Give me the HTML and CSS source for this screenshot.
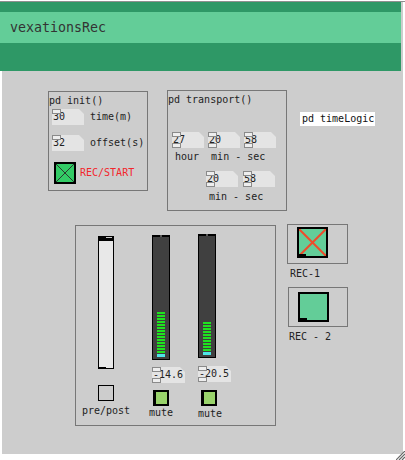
FILE: index.html
```html
<!DOCTYPE html>
<html lang="en">
<head>
  <meta charset="UTF-8">
  <meta name="viewport" content="width=device-width, initial-scale=1.0">
  <title>vexationsRec</title>
  <link rel="stylesheet" href="styles.css">
</head>
<body>
  <div class="window">
    <header class="titlebar">
      <div class="title">vexationsRec</div>
    </header>

    <main class="canvas">

      <!-- init subpatch -->
      <section class="sub init">
        <div class="sub-name">pd init()</div>
        <div class="row row-time">
          <span class="atom in">30</span>
          <span class="label">time(m)</span>
        </div>
        <div class="row row-offset">
          <span class="atom in">32</span>
          <span class="label">offset(s)</span>
        </div>
        <div class="row row-start">
          <span class="tgl tgl-start">
            <svg width="18" height="18" viewBox="0 0 18 18">
              <line x1="0" y1="0" x2="18" y2="18" stroke="#2a3a2e" stroke-width="1"/>
              <line x1="18" y1="0" x2="0" y2="18" stroke="#2a3a2e" stroke-width="1"/>
            </svg>
          </span>
          <span class="label red">REC/START</span>
        </div>
      </section>

      <!-- transport subpatch -->
      <section class="sub transport">
        <div class="sub-name">pd transport()</div>
        <div class="row row-clock">
          <span class="atom in out">27</span>
          <span class="atom in out">20</span>
          <span class="atom in out">58</span>
        </div>
        <div class="row row-units">
          <span class="label hour">hour</span>
          <span class="label minsec">min - sec</span>
        </div>
        <div class="row row-clock2">
          <span class="atom in out">20</span>
          <span class="atom in out">58</span>
        </div>
        <div class="row row-units2">
          <span class="label">min - sec</span>
        </div>
      </section>

      <div class="obj timelogic">pd timeLogic</div>

      <!-- mixer -->
      <section class="sub mixer">
        <div class="strip strip-pre">
          <div class="vslider"></div>
          <span class="tgl tgl-empty"></span>
          <span class="label">pre/post</span>
        </div>
        <div class="strip strip-a">
          <div class="vu vu-a">
            <div class="vu-level" style="height: 42px"></div>
            <div class="vu-clip"></div>
          </div>
          <span class="atom in out wide">-14.6</span>
          <span class="tgl tgl-mute"></span>
          <span class="label">mute</span>
        </div>
        <div class="strip strip-b">
          <div class="vu vu-b">
            <div class="vu-level" style="height: 30px"></div>
            <div class="vu-clip"></div>
          </div>
          <span class="atom in out wide">-20.5</span>
          <span class="tgl tgl-mute"></span>
          <span class="label">mute</span>
        </div>
      </section>

      <!-- record toggles -->
      <div class="rec rec-1">
        <div class="rec-frame">
          <span class="rec-tgl">
            <svg width="27" height="27" viewBox="0 0 27 27">
              <line x1="0" y1="0" x2="27" y2="27" stroke="#ef4b2b" stroke-width="2"/>
              <line x1="27" y1="0" x2="0" y2="27" stroke="#ef4b2b" stroke-width="2"/>
            </svg>
          </span>
        </div>
        <span class="label">REC-1</span>
      </div>

      <div class="rec rec-2">
        <div class="rec-frame">
          <span class="rec-tgl"></span>
        </div>
        <span class="label">REC - 2</span>
      </div>
    </main>
  </div>

  <svg class="grip" width="9" height="9" viewBox="0 0 9 9">
    <line x1="9" y1="0" x2="0" y2="9" stroke="#666" stroke-width="1.2"/>
    <line x1="9" y1="3" x2="3" y2="9" stroke="#666" stroke-width="1.2"/>
    <line x1="9" y1="6" x2="6" y2="9" stroke="#666" stroke-width="1.2"/>
  </svg>
</body>
</html>
```

FILE: styles.css
```css
/* Reset */
* {
  box-sizing: border-box;
  margin: 0;
  padding: 0;
}

body {
  position: relative;
  font-family: "DejaVu Sans Mono", "Liberation Mono", monospace;
  font-size: 10px;
  color: #222;
  background-color: #fff;
  padding-top: 1px;
  height: 460px;
  overflow: hidden;
}

.window {
  border-top: 1px solid #8f8f8f;
}

/* Title bar */
.titlebar {
  width: 403px;
  background-color: #2e9866;
  border-right: 2px solid #cdcdcd;
  padding: 10px 0 28px 0;
}

.title {
  height: 31px;
  line-height: 31px;
  background-color: #63cd98;
  padding-left: 10px;
  font-size: 13.3px;
  color: #333;
}

/* Patch canvas */
.canvas {
  position: relative;
  margin-left: 2px;
  width: 401px;
  height: 383px;
  background-color: #cdcdcd;
}

.label {
  line-height: 12px;
  white-space: nowrap;
}

.red {
  color: #f3262b;
}

.row {
  display: flex;
  align-items: center;
}

/* Subpatch boxes: placed where they sit on the patch */
.sub {
  position: absolute;
  border: 1px solid #777;
}

.sub-name {
  line-height: 12px;
}

/* Number atoms */
.atom {
  position: relative;
  display: inline-block;
  width: 32px;
  height: 16px;
  line-height: 16px;
  padding-left: 1px;
  background-color: #e4e4e4;
  clip-path: polygon(0 0, calc(100% - 5px) 0, 100% 5px, 100% 100%, 0 100%);
  white-space: nowrap;
}

.atom.wide {
  width: 33px;
}

.atom.in::before,
.atom.out::after {
  content: "";
  position: absolute;
  left: 0;
  width: 7px;
  height: 3px;
  border: 1px solid #8a8a8a;
  background-color: #eee;
}

.atom.in::before {
  top: 0;
}

.atom.out::after {
  bottom: 0;
}

/* Toggles */
.tgl {
  display: inline-block;
  position: relative;
}

.tgl-start {
  width: 22px;
  height: 22px;
  border: 2px solid #000;
  background-color: #33cc66;
}

.tgl-start svg {
  display: block;
}

.tgl-empty {
  width: 16px;
  height: 16px;
  border: 1px solid #000;
}

.tgl-mute {
  width: 16px;
  height: 16px;
  border: 2px solid #000;
  border-left-width: 3px;
  background-color: #99d36b;
}

/* pd init() */
.init {
  left: 46px;
  top: 20px;
  width: 100px;
  height: 100px;
  padding-top: 3px;
}

.init .row .atom {
  margin-left: 3px;
}

.init .row .label {
  margin-left: 6px;
}

.row-time {
  margin-top: 2px;
}

.row-offset {
  margin-top: 10px;
}

.row-start {
  margin-top: 11px;
}

.init .row-start .tgl {
  margin-left: 5px;
}

.init .row-start .label {
  margin-left: 4px;
}

/* pd transport() */
.transport {
  left: 165px;
  top: 19px;
  width: 120px;
  height: 121px;
  padding-top: 3px;
}

.row-clock {
  margin-top: 26px;
  padding-left: 4px;
  gap: 4px;
}

.row-units {
  margin-top: 3px;
}

.hour {
  margin-left: 7px;
}

.minsec {
  margin-left: 12px;
}

.row-clock2 {
  margin-top: 8px;
  padding-left: 38px;
  gap: 5px;
}

.row-units2 {
  margin-top: 4px;
  padding-left: 41px;
}

/* pd timeLogic */
.obj {
  position: absolute;
  background-color: #fff;
  color: #111;
}

.timelogic {
  left: 298px;
  top: 41px;
  width: 75px;
  height: 14px;
  line-height: 14px;
  padding-left: 2px;
}

/* Mixer */
.mixer {
  left: 73px;
  top: 154px;
  width: 201px;
  height: 201px;
  display: flex;
  align-items: flex-start;
  padding-left: 6px;
}

.strip {
  display: flex;
  flex-direction: column;
}

.strip-pre {
  width: 48px;
  align-items: center;
  padding-top: 10px;
}

.vslider {
  position: relative;
  width: 16px;
  height: 133px;
  background-color: #e8e8e8;
  border: 1px solid #000;
  border-top-width: 5px;
}

.vslider::before {
  content: "";
  position: absolute;
  right: 1px;
  top: -4px;
  width: 6px;
  height: 1px;
  background-color: #ccc;
}

.vslider::after {
  content: "";
  position: absolute;
  left: 0;
  bottom: 0;
  width: 7px;
  height: 1px;
  background-color: #000;
}

.strip-pre .tgl-empty {
  margin-top: 16px;
}

.strip-pre .label {
  margin-top: 4px;
}

.strip-a {
  margin-left: 22px;
  width: 32px;
  align-items: flex-start;
  padding-top: 9px;
}

.strip-b {
  margin-left: 14px;
  width: 32px;
  align-items: flex-start;
  padding-top: 8px;
}

.vu {
  position: relative;
  width: 18px;
  background-color: #404040;
  border: 1px solid #000;
  border-top-width: 2px;
  display: flex;
  flex-direction: column;
  justify-content: flex-end;
  align-items: center;
  padding-bottom: 2px;
}

.vu::before {
  content: "";
  position: absolute;
  top: -2px;
  left: 7px;
  width: 2px;
  height: 2px;
  background-color: #555;
}

.vu-a {
  height: 125px;
}

.vu-b {
  height: 124px;
}

.vu-level {
  width: 8px;
  background: repeating-linear-gradient(to bottom, #1fe41f 0, #1fe41f 2px, transparent 2px, transparent 3px);
}

.vu-clip {
  width: 8px;
  height: 3px;
  background-color: #4ee6e6;
}

.strip-a .atom {
  margin-top: 7px;
}

.strip-a .tgl-mute {
  margin-top: 7px;
  margin-left: 1px;
}

.strip-a .label {
  margin-top: 1px;
  margin-left: -3px;
}

.strip-b .atom {
  margin-top: 8px;
}

.strip-b .tgl-mute {
  margin-top: 8px;
  margin-left: 3px;
}

.strip-b .label {
  margin-top: 2px;
}

/* REC toggles */
.rec {
  position: absolute;
  display: flex;
  flex-direction: column;
}

.rec-1 {
  left: 285px;
  top: 153px;
}

.rec-2 {
  left: 286px;
  top: 216px;
}

.rec-frame {
  width: 61px;
  height: 40px;
  border: 1px solid #777;
  padding: 2px 0 0 9px;
}

.rec-2 .rec-frame {
  width: 60px;
  padding-top: 4px;
}

.rec-tgl {
  position: relative;
  display: block;
  width: 31px;
  height: 31px;
  border: 2px solid #000;
  background-color: #63cd98;
}

.rec-2 .rec-tgl {
  height: 30px;
}

.rec-tgl svg {
  display: block;
}

.rec-tgl::after {
  content: "";
  position: absolute;
  left: 0;
  bottom: 0;
  width: 7px;
  height: 2px;
  background-color: #000;
}

.rec-1 .label {
  margin-top: 4px;
  margin-left: 3px;
}

.rec-2 .label {
  margin-top: 4px;
  margin-left: 1px;
}

/* Window resize grip, sits over the bottom-right corner */
.grip {
  position: absolute;
  right: 0;
  bottom: 0;
  display: block;
}
```
